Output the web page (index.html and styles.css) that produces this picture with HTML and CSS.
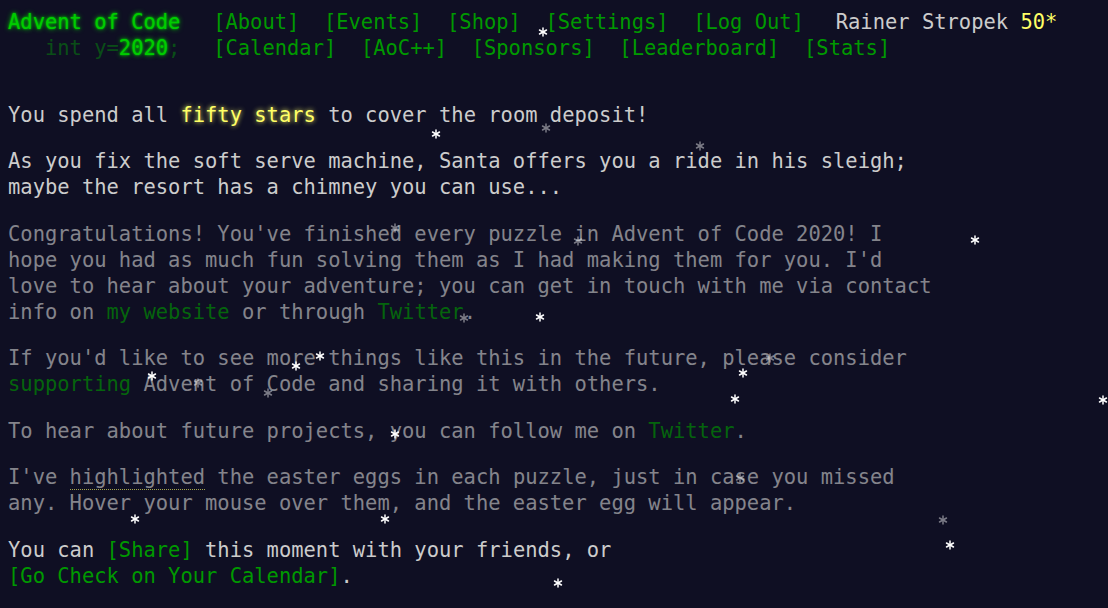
FILE: index.html
```html
<!DOCTYPE html>
<html>
<head>
<meta charset="utf-8">
<title>Day 25 - Advent of Code 2020</title>
<link rel="stylesheet" href="styles.css">
</head>
<body>
<div class="page">
  <header class="header">
    <div class="hrow">
      <h1 class="title title-global"><a href="#">Advent of Code</a></h1>
      <nav>
        <ul class="nav">
          <li><a href="#">[About]</a></li>
          <li><a href="#">[Events]</a></li>
          <li><a href="#">[Shop]</a></li>
          <li><a href="#">[Settings]</a></li>
          <li><a href="#">[Log Out]</a></li>
        </ul>
      </nav>
      <div class="user">Rainer Stropek <span class="star-count">50*</span></div>
    </div>
    <div class="hrow">
      <h1 class="title title-event"><span class="wrap">   int y=</span><a href="#">2020</a><span class="wrap">;</span></h1>
      <nav>
        <ul class="nav">
          <li><a href="#">[Calendar]</a></li>
          <li><a href="#">[AoC++]</a></li>
          <li><a href="#">[Sponsors]</a></li>
          <li><a href="#">[Leaderboard]</a></li>
          <li><a href="#">[Stats]</a></li>
        </ul>
      </nav>
    </div>
  </header>

  <main class="main">
    <article class="article">
      <p>You spend all <em class="star">fifty stars</em> to cover the room deposit!</p>
      <p>As you fix the soft serve machine, Santa offers you a ride in his sleigh;<br>maybe the resort has a chimney you can use...</p>
    </article>
    <article class="article quiet">
      <p>Congratulations! You've finished every puzzle in Advent of Code 2020! I<br>hope you had as much fun solving them as I had making them for you. I'd<br>love to hear about your adventure; you can get in touch with me via contact<br>info on <a href="#">my website</a> or through <a href="#">Twitter</a>.</p>
      <p>If you'd like to see more things like this in the future, please consider<br><a href="#">supporting</a> Advent of Code and sharing it with others.</p>
      <p>To hear about future projects, you can follow me on <a href="#">Twitter</a>.</p>
      <p>I've <span class="egg">highlighted</span> the easter eggs in each puzzle, just in case you missed<br>any. Hover your mouse over them, and the easter egg will appear.</p>
    </article>
    <article class="article">
      <p>You can <a href="#">[Share]</a> this moment with your friends, or<br><a href="#">[Go Check on Your Calendar]</a>.</p>
    </article>
  </main>

  <div class="snow" aria-hidden="true">
    <svg class="flake" style="left:538px;top:27px" viewBox="0 0 10 10"><use href="#ast"/></svg>
    <svg class="flake" style="left:431px;top:129px" viewBox="0 0 10 10"><use href="#ast"/></svg>
    <svg class="flake dim" style="left:541px;top:123px" viewBox="0 0 10 10"><use href="#ast"/></svg>
    <svg class="flake dim" style="left:695px;top:141px" viewBox="0 0 10 10"><use href="#ast"/></svg>
    <svg class="flake dim" style="left:390px;top:223px" viewBox="0 0 10 10"><use href="#ast"/></svg>
    <svg class="flake dim" style="left:573px;top:236px" viewBox="0 0 10 10"><use href="#ast"/></svg>
    <svg class="flake" style="left:970px;top:235px" viewBox="0 0 10 10"><use href="#ast"/></svg>
    <svg class="flake dim" style="left:459px;top:313px" viewBox="0 0 10 10"><use href="#ast"/></svg>
    <svg class="flake" style="left:535px;top:312px" viewBox="0 0 10 10"><use href="#ast"/></svg>
    <svg class="flake" style="left:315px;top:351px" viewBox="0 0 10 10"><use href="#ast"/></svg>
    <svg class="flake" style="left:291px;top:361px" viewBox="0 0 10 10"><use href="#ast"/></svg>
    <svg class="flake" style="left:147px;top:371px" viewBox="0 0 10 10"><use href="#ast"/></svg>
    <svg class="flake dim" style="left:193px;top:378px" viewBox="0 0 10 10"><use href="#ast"/></svg>
    <svg class="flake dim" style="left:263px;top:388px" viewBox="0 0 10 10"><use href="#ast"/></svg>
    <svg class="flake dim" style="left:765px;top:353px" viewBox="0 0 10 10"><use href="#ast"/></svg>
    <svg class="flake" style="left:738px;top:368px" viewBox="0 0 10 10"><use href="#ast"/></svg>
    <svg class="flake" style="left:730px;top:394px" viewBox="0 0 10 10"><use href="#ast"/></svg>
    <svg class="flake" style="left:1098px;top:395px" viewBox="0 0 10 10"><use href="#ast"/></svg>
    <svg class="flake" style="left:390px;top:429px" viewBox="0 0 10 10"><use href="#ast"/></svg>
    <svg class="flake dim" style="left:735px;top:473px" viewBox="0 0 10 10"><use href="#ast"/></svg>
    <svg class="flake" style="left:130px;top:514px" viewBox="0 0 10 10"><use href="#ast"/></svg>
    <svg class="flake" style="left:380px;top:514px" viewBox="0 0 10 10"><use href="#ast"/></svg>
    <svg class="flake dim" style="left:938px;top:515px" viewBox="0 0 10 10"><use href="#ast"/></svg>
    <svg class="flake" style="left:945px;top:540px" viewBox="0 0 10 10"><use href="#ast"/></svg>
    <svg class="flake" style="left:553px;top:578px" viewBox="0 0 10 10"><use href="#ast"/></svg>
  </div>

  <svg class="defs" width="0" height="0" aria-hidden="true">
    <defs>
      <g id="ast" stroke="#ffffff" stroke-width="1.5" stroke-linecap="round">
        <line x1="5" y1="1" x2="5" y2="9"/>
        <line x1="1.5" y1="3" x2="8.5" y2="7"/>
        <line x1="1.5" y1="7" x2="8.5" y2="3"/>
      </g>
    </defs>
  </svg>
</div>
</body>
</html>
```

FILE: styles.css
```css
html, body {
  background: #0f0f23;
}
body {
  margin: 0;
  color: #cccccc;
  font-family: "DejaVu Sans Mono", "Liberation Mono", monospace;
  font-size: 20.47px;
  line-height: 26px;
  overflow: hidden;
}
.page {
  position: relative;
  padding: 9px 8px 8px;
  min-height: 591px;
}
a {
  color: #009900;
  text-decoration: none;
}
.header {
  white-space: nowrap;
  margin-bottom: 41px;
}
.hrow {
  display: flex;
  align-items: baseline;
}
.title {
  margin: 0;
  padding-right: 1em;
  font-size: 1em;
  font-weight: normal;
  white-space: pre;
}
.title a {
  color: #00cc00;
  text-shadow: 0 0 2px #00cc00, 0 0 5px #00cc00;
}
.title-event .wrap {
  color: #00cc00;
  opacity: 0.33;
}
.nav {
  display: flex;
  margin: 0;
  padding: 0;
  list-style: none;
}
.nav li {
  padding: 0 0.6em;
}
.user {
  padding-left: 0.95em;
  color: #cccccc;
}
.star-count {
  color: #ffff66;
}
.main {
  display: flex;
  flex-direction: column;
}
.article {
  width: 46em;
}
.article p {
  margin: 0 0 1em;
}
.quiet {
  opacity: 0.62;
}
em.star {
  font-style: normal;
  color: #ffff66;
  text-shadow: 0 0 5px #ffff66;
}
.egg {
  border-bottom: 1px dotted #ffff66;
}
.snow {
  position: absolute;
  inset: 0;
  pointer-events: none;
}
.flake {
  position: absolute;
  width: 10px;
  height: 10px;
}
.flake.dim {
  opacity: 0.45;
}
.defs {
  position: absolute;
}
```
